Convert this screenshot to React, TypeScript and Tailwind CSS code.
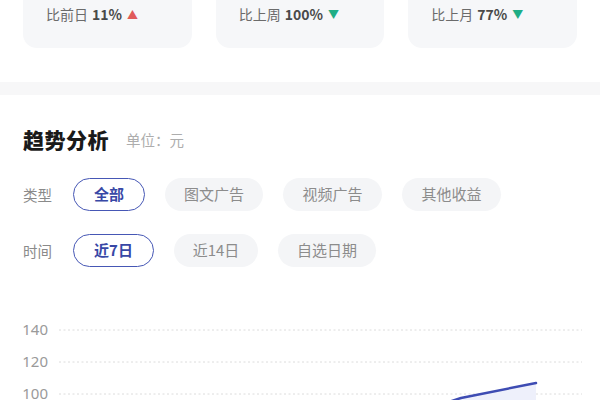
import React from "react";

const font = "font-['Noto_Sans_CJK_SC','Noto_Sans',sans-serif]";

const compares = [
  { label: "比前日", value: "11%", up: true },
  { label: "比上周", value: "100%", up: false },
  { label: "比上月", value: "77%", up: false },
];

const types = [
  { text: "全部", w: "w-[72px]", active: true },
  { text: "图文广告", w: "w-[98px]", active: false },
  { text: "视频广告", w: "w-[99px]", active: false },
  { text: "其他收益", w: "w-[99px]", active: false },
];

const times = [
  { text: "近7日", w: "w-[81px]", active: true },
  { text: "近14日", w: "w-[84px]", active: false },
  { text: "自选日期", w: "w-[98px]", active: false },
];

function Pill({ text, w, active }: { text: string; w: string; active: boolean }) {
  return (
    <div
      className={
        active
          ? `${w} h-[33px] rounded-full border-[1.5px] border-[#4657b5] bg-white text-[#3848a6] font-bold text-[15px] flex items-center justify-center`
          : `${w} h-[33px] rounded-full bg-[#f4f5f7] text-[#8c8c8c] text-[15px] flex items-center justify-center`
      }
    >
      {text}
    </div>
  );
}

function FilterRow({
  label,
  items,
}: {
  label: string;
  items: { text: string; w: string; active: boolean }[];
}) {
  return (
    <div className="flex items-center">
      <span className="w-[50px] text-[14.5px] text-[#8a8a8a]">{label}</span>
      <div className="flex gap-[20px]">
        {items.map((it) => (
          <Pill key={it.text} {...it} />
        ))}
      </div>
    </div>
  );
}

function Chart() {
  const grid = [
    { v: "140", y: 30 },
    { v: "120", y: 62 },
    { v: "100", y: 94 },
  ];
  return (
    <svg width="600" height="120" className="block">
      {grid.map((g) => (
        <g key={g.v}>
          <text
            x="48"
            y={g.y + 5}
            textAnchor="end"
            fontSize="15"
            fill="#9a9a9a"
            fontFamily="'Noto Sans','Noto Sans CJK SC',sans-serif"
          >
            {g.v}
          </text>
          <line
            x1="59"
            x2="582"
            y1={g.y}
            y2={g.y}
            stroke="#dcdcdc"
            strokeWidth="1"
            strokeDasharray="2 2.5"
          />
        </g>
      ))}
      <polygon
        points="387,122 461,98 536,83 536,130 387,130"
        fill="#eef0fb"
      />
      <polyline
        points="387,122 461,98 536,83"
        fill="none"
        stroke="#3e4cb3"
        strokeWidth="2.5"
        strokeLinejoin="round"
        strokeLinecap="round"
      />
    </svg>
  );
}

export default function App() {
  return (
    <div className={`w-[600px] h-[400px] overflow-hidden bg-white ${font}`}>
      <div className="h-[82px] px-[23px] grid grid-cols-3 gap-6 items-start">
        {compares.map((c) => (
          <div
            key={c.label}
            className="h-[48px] rounded-b-[14px] bg-[#f6f7f9] px-[23px] pt-[4px] flex items-start"
          >
            <div className="flex items-center h-[20px] text-[14px]">
              <span className="text-[#6b6b6b]">{c.label}</span>
              <span className="ml-[4px] font-bold text-[#4a4a4a]">{c.value}</span>
              <span
                className={
                  c.up
                    ? "ml-[5px] text-[11px] text-[#e05a5a]"
                    : "ml-[5px] text-[11px] text-[#1fae86]"
                }
              >
                {c.up ? "▲" : "▼"}
              </span>
            </div>
          </div>
        ))}
      </div>
      <div className="h-[13px] bg-[#f7f7f8]" />
      <div className="px-[23px] pt-[31px]">
        <div className="flex items-center h-[28px]">
          <h2 className="text-[21px] font-black text-[#1a1a1a] tracking-[0.5px]">趋势分析</h2>
          <span className="ml-[17px] text-[14.5px] text-[#adadad]">单位：元</span>
        </div>
        <div className="mt-[24px] flex flex-col gap-[23px]">
          <FilterRow label="类型" items={types} />
          <FilterRow label="时间" items={times} />
        </div>
      </div>
      <div className="mt-[33px]">
        <Chart />
      </div>
    </div>
  );
}
